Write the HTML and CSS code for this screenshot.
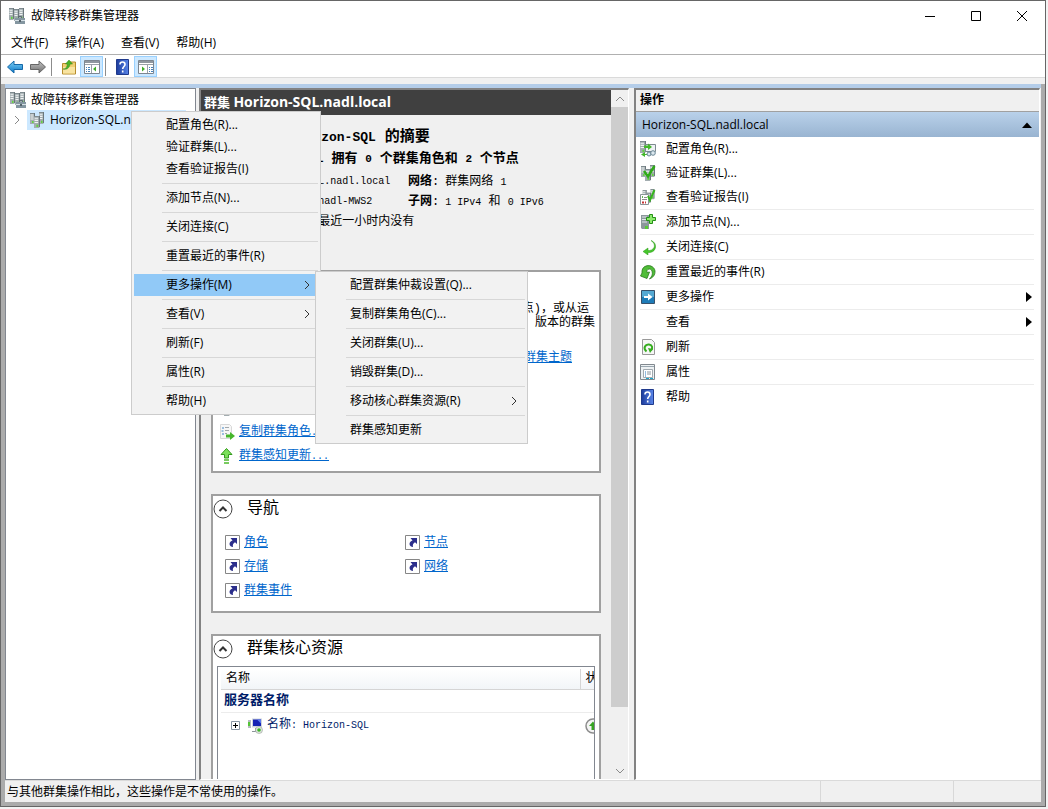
FILE: index.html
```html
<!DOCTYPE html>
<html lang="zh-CN">
<head>
  <meta charset="UTF-8" />
  <meta name="viewport" content="width=device-width, initial-scale=1" />
  <title>故障转移群集管理器</title>
  <link rel="stylesheet" href="styles.css">
</head>
<body>
  <!-- shared icons -->
  <svg class="defs" width="0" height="0" aria-hidden="true">
    <defs>
      <linearGradient id="gBlue" x1="0" y1="0" x2="0" y2="1"><stop offset="0" stop-color="#7fd0f5"/><stop offset="1" stop-color="#0a78c8"/></linearGradient>
      <linearGradient id="gGray" x1="0" y1="0" x2="0" y2="1"><stop offset="0" stop-color="#c4c4c4"/><stop offset="1" stop-color="#6e6e6e"/></linearGradient>
      <linearGradient id="gHelp" x1="0" y1="0" x2="1" y2="0"><stop offset="0" stop-color="#1c3c9c"/><stop offset="1" stop-color="#5a86ea"/></linearGradient>
      <symbol id="rack" viewBox="0 0 5 11" preserveAspectRatio="none">
        <path d="M0 1 1 0h4v10l-1 1H0z" fill="#a3adb0"/>
        <path d="M.5 2h3M.5 4h3M.5 6h3" stroke="#f0f3f3"/>
        <path d="M4.500 0v10" stroke="#6b777c"/>
        <path d="M0 .5h4" stroke="#7f8b90"/>
        <path d="M2 8h1.500v2H2z" fill="#62d53e"/>
      </symbol>
      <symbol id="cluster" viewBox="0 0 16 16">
        <use href="#rack" x="0" y="0" width="5" height="12"/>
        <use href="#rack" x="5" y="1" width="5" height="12"/>
        <use href="#rack" x="10" y="0" width="5" height="12"/>
        <path d="M9.500 10V8.500h3V10" fill="none" stroke="#5d6b73"/>
        <path d="M6 10h10v6H6z" fill="#8496a0"/><path d="M6 12.500h10" stroke="#d7e1e6"/><path d="M10 12h2v2h-2z" fill="#55636b"/>
      </symbol>
      <symbol id="racks" viewBox="0 0 16 16">
        <use href="#rack" x="1" y="1" width="5" height="11"/>
        <use href="#rack" x="10" y="0" width="5" height="12"/>
        <use href="#rack" x="5" y="4" width="6" height="12"/>
      </symbol>
      <symbol id="help" viewBox="0 0 16 16">
        <path d="M1.500.5h12v15h-12z" fill="url(#gHelp)" stroke="#203a8c"/>
        <path d="M5 5.500c0-3.300 5-3.300 5 0 0 2-2.300 2-2.300 4.500M7.700 11.500v2" fill="none" stroke="#fff" stroke-width="1.600"/>
      </symbol>
      <symbol id="shortcut" viewBox="0 0 16 16">
        <path d="M.5.5h14v14H.5z" fill="#fff" stroke="#868686"/>
        <path d="M12 3v6l-2-1.700C8 8.500 7.500 10 8 12c-1.500 0-3.500-1-3.500-3 0-1.700 1.500-3 3-3.500L5.500 3z" fill="#2c2f8c"/>
      </symbol>
      <symbol id="collapse" viewBox="0 0 20 20">
        <circle cx="10" cy="10" r="9" fill="#fff" stroke="#444"/>
        <path d="M6.500 12 10 8.500l3.500 3.500" fill="none" stroke="#333" stroke-width="2"/>
      </symbol>
      <symbol id="chev" viewBox="0 0 8 8"><path d="M2 0l4 4-4 4" fill="none" stroke="currentColor"/></symbol>
    </defs>
  </svg>

  <div class="window">
    <header class="titlebar">
      <svg class="icon"><use href="#cluster"/></svg>
      <h1>故障转移群集管理器</h1>
      <div class="window-buttons">
        <button aria-label="最小化"><svg viewBox="0 0 10 10"><path d="M0 5.500h10"/></svg></button>
        <button aria-label="最大化"><svg viewBox="0 0 10 10"><path d="M.5.5h9v9h-9z"/></svg></button>
        <button aria-label="关闭"><svg viewBox="0 0 10 10"><path d="M0 0l10 10M10 0 0 10"/></svg></button>
      </div>
    </header>

    <nav class="menubar">
      <button>文件(F)</button>
      <button>操作(A)</button>
      <button>查看(V)</button>
      <button>帮助(H)</button>
    </nav>

    <div class="toolbar">
      <button aria-label="后退"><svg class="icon" viewBox="0 0 16 16"><path d="M.5 8 7 2v3.500h8.500v5H7V14z" fill="url(#gBlue)" stroke="#1668a8"/></svg></button>
      <button aria-label="前进"><svg class="icon" viewBox="0 0 16 16"><path d="M15.500 8 9 2v3.500H.5v5H9V14z" fill="url(#gGray)" stroke="#666"/></svg></button>
      <span class="divider"></span>
      <button aria-label="向上"><svg class="icon" viewBox="0 0 16 16"><path d="M1.500 4.500h6l1-1.500h6v12h-13z" fill="#efcf72" stroke="#b58c2c"/><path d="M2 8h12v6.500H2z" fill="#f8e3a0"/><path d="M2 10c3 0 4-2 4.500-5H4.500L8 1l3.500 4H9C8.500 9 6 11 2 10z" fill="#49b428" stroke="#2c8317" stroke-width=".5"/></svg></button>
      <button class="on" aria-label="显示/隐藏控制台树" aria-pressed="true"><svg class="icon" viewBox="0 0 16 16"><path d="M.5 1.500h15v13H.5z" fill="#fff" stroke="#7d8690"/><path d="M1 2h14v2H1z" fill="#8f979f"/><path d="M1 5.500h14M7.500 6v8" stroke="#9aa1a8"/><path d="M2 8.500h1M4 8.500h2M2 10.500h1M4 10.500h2M2 12.500h1M4 12.500h2" stroke="#4784bd"/><path d="M12 7.500v5L9 10z" fill="#3fae29"/></svg></button>
      <span class="divider"></span>
      <button aria-label="帮助"><svg class="icon"><use href="#help"/></svg></button>
      <button class="on" aria-label="显示/隐藏操作窗格" aria-pressed="true"><svg class="icon" viewBox="0 0 16 16"><path d="M.5 1.500h15v13H.5z" fill="#fff" stroke="#7d8690"/><path d="M1 2h14v2H1z" fill="#8f979f"/><path d="M1 5.500h14M9.500 6v8" stroke="#9aa1a8"/><path d="M11 8.500h1M13 8.500h2M11 10.500h1M13 10.500h2M11 12.500h1M13 12.500h2" stroke="#4784bd"/><path d="M4 7.500v5L7 10z" fill="#3fae29"/></svg></button>
    </div>

    <div class="frame">
      <div class="panes">
        <aside class="tree">
          <div class="tree-root"><svg class="icon"><use href="#cluster"/></svg>故障转移群集管理器</div>
          <div class="tree-child">
            <svg class="chevron"><use href="#chev"/></svg>
            <span class="tree-selected"><svg class="icon"><use href="#racks"/></svg><span>Horizon-SQL.nadl.local</span></span>
          </div>
        </aside>

        <main class="main">
          <div class="content">
            <h2 class="banner">群集 <span>Horizon-SQL.nadl.local</span></h2>

            <section class="summary">
              <div class="summary-head">
                <svg class="icon"><use href="#cluster"/></svg>
                <div>
                  <h3>群集 <span class="latin">Horizon-SQL</span> 的摘要</h3>
                  <p><span class="latin">Horizon-SQL</span> 拥有 <span class="latin">0</span> 个群集角色和 <span class="latin">2</span> 个节点</p>
                </div>
              </div>
              <dl class="facts">
                <div><dt>名称<i>:</i></dt><dd class="latin">Horizon-SQL.nadl.local</dd></div>
                <div><dt>网络<i>:</i></dt><dd>群集网络 <span class="latin">1</span></dd></div>
                <div><dt>当前主机服务器<i>:</i></dt><dd class="latin">nadl-MWS2</dd></div>
                <div><dt>子网<i>:</i></dt><dd><span class="latin">1 IPv4</span> 和 <span class="latin">0 IPv6</span></dd></div>
                <div><dt>最近的群集事件<i>:</i></dt><dd>最近一小时内没有</dd></div>
              </dl>
            </section>

            <section class="card configure">
              <h3 class="card-title"><svg><use href="#collapse"/></svg>配置</h3>
              <p class="intro">
                <span>验证硬件配置(可选)，添加服务器(节点)，或从运</span>
                <span>行 <a href="#">Windows Server</a> 版本的群集</span>
              </p>
              <p class="topic"><a href="#">故障转移群集主题</a></p>
              <ul class="tasks">
                <li><svg class="icon"><use href="#racks"/></svg><a href="#">验证群集<span class="latin">...</span></a></li>
                <li><svg class="icon"><use href="#racks"/></svg><a href="#">添加节点<span class="latin">...</span></a></li>
                <li><svg class="icon" viewBox="0 0 16 16"><path d="M1.500.5h9l2 2v12h-11z" fill="#f7f7f7" stroke="#d8d8d8"/><path d="M3 4h2M2.500 7h2M3 10h2" stroke="#3e86c8"/><path d="M6 3.500h4M6 6.500h4M6 9.500h2" stroke="#a2a8ac"/><path d="M7 10.500h4V8l5 4-5 4v-2.500H7z" fill="#46b62c"/></svg><a href="#">复制群集角色<span class="latin">...</span></a></li>
                <li><svg class="icon" viewBox="0 0 16 16"><path d="M7.500.5 13 6.500H9.500V10h-4V6.500H2z" fill="#7be05a" stroke="#349a1c"/><path d="M5 12h5M5 15h5" stroke="#4dbb2c" stroke-width="1.500"/></svg><a href="#">群集感知更新<span class="latin">...</span></a></li>
              </ul>
            </section>

            <section class="card nav">
              <h3 class="card-title"><svg><use href="#collapse"/></svg>导航</h3>
              <ul class="links">
                <li><svg class="icon"><use href="#shortcut"/></svg><a href="#">角色</a></li>
                <li><svg class="icon"><use href="#shortcut"/></svg><a href="#">节点</a></li>
                <li><svg class="icon"><use href="#shortcut"/></svg><a href="#">存储</a></li>
                <li><svg class="icon"><use href="#shortcut"/></svg><a href="#">网络</a></li>
                <li><svg class="icon"><use href="#shortcut"/></svg><a href="#">群集事件</a></li>
              </ul>
            </section>

            <section class="card resources">
              <h3 class="card-title"><svg><use href="#collapse"/></svg>群集核心资源</h3>
              <div class="grid">
                <table>
                  <thead>
                    <tr><th>名称</th><th class="state">状态</th></tr>
                  </thead>
                  <tbody>
                    <tr class="group"><td colspan="2">服务器名称</td></tr>
                    <tr class="row">
                      <td>
                        <div class="resource">
                          <svg class="expand" viewBox="0 0 9 9"><path d="M.5.5h8v8h-8z" fill="#fff" stroke="#8b97a5"/><path d="M2 4.500h5M4.500 2v5" stroke="#000"/></svg>
                          <svg class="icon" viewBox="0 0 16 16"><path d="M1 2h3v8H1z" fill="#b5bbbf"/><path d="M1 4h2v4H1z" fill="#54c436"/><path d="M5 .5h10v9H5z" fill="#cfd5dc"/><path d="M6 1.500h8v6.500H6z" fill="#1521b4"/><path d="M10 1.500h4v4z" fill="#5c7cf0"/><path d="M8 10h2v3h2v1H5v-1h3z" fill="#8c9499"/><circle cx="12" cy="12" r="3.500" fill="#dfe5df" stroke="#9aa39a" stroke-width=".6"/><circle cx="12" cy="12" r="1.800" fill="#3cb428"/></svg>
                          <span>名称<span class="latin">: Horizon-SQL</span></span>
                        </div>
                      </td>
                      <td class="state"><svg class="icon" viewBox="0 0 16 16"><circle cx="8" cy="8" r="7" fill="#f4f4f4" stroke="#8c8c8c" stroke-width="1.500"/><path d="M8 3.500 12 8H9.500v4h-3V8H4z" fill="#36a322"/></svg></td>
                    </tr>
                  </tbody>
                </table>
              </div>
            </section>
          </div>

          <div class="scrollbar">
            <button aria-label="向上滚动"><svg viewBox="0 0 8 8"><path d="M0 6l4-4 4 4"/></svg></button>
            <div class="thumb"></div>
            <button aria-label="向下滚动"><svg viewBox="0 0 8 8"><path d="M0 2l4 4 4-4"/></svg></button>
          </div>
        </main>

        <aside class="actions">
          <h2>操作</h2>
          <h3><span>Horizon-SQL.nadl.local</span><svg viewBox="0 0 10 6"><path d="M0 6l5-5.500L10 6z"/></svg></h3>
          <ul>
            <li><button><svg class="icon" viewBox="0 0 16 16"><use href="#rack" x="0" y="0" width="6" height="12"/><path d="M5.500 3.500h10v7h-10z" fill="#eef2f4" stroke="#7d8a90"/><path d="M4 4.500h4V2.500l4 3.500-4 3V7H4zM9 13H5v-2l-4 2.500L5 16v-2h4z" fill="#43b82a"/><circle cx="9" cy="13" r="2" fill="#dbe7ee" stroke="#698594"/><circle cx="13" cy="12" r="2.300" fill="#dbe7ee" stroke="#698594"/></svg>配置角色(R)...</button></li>
            <li><button><svg class="icon" viewBox="0 0 16 16"><use href="#racks" width="16" height="16"/><path d="M4 6l4 5.500L14.500 1" fill="none" stroke="#2faa18" stroke-width="2.500"/></svg>验证群集(L)...</button></li>
            <li><button><svg class="icon" viewBox="0 0 16 16"><use href="#racks" x="1" width="15" height="14"/><path d="M.5 5.500h8v10h-8z" fill="#fff" stroke="#8a9498"/><path d="M2 8h1" stroke="#2f9c1c" stroke-width="1.500"/><path d="M4 8.500h3M2 10.500h5" stroke="#8c8c8c"/><path d="M2 13.500h2M5 13.500h1" stroke="#c53434" stroke-width="2"/><path d="M8 7l2 4 4.500-10" fill="none" stroke="#36b41d" stroke-width="2"/></svg>查看验证报告(I)</button></li>
            <li class="line"><button><svg class="icon" viewBox="0 0 16 16"><path d="M1 1h8v14H2l-1-1z" fill="#8b979b"/><path d="M2 3h5M2 5.500h5M2 8h5" stroke="#e2e8ea"/><path d="M5 12h3v3H5z" fill="#57cb35"/><path d="M9.500.5h3v3h3v3h-3v3h-3v-3h-3v-3h3z" fill="#8bea6b" stroke="#249016"/></svg>添加节点(N)...</button></li>
            <li class="line"><button><svg class="icon" viewBox="0 0 16 16"><path d="M11 1.500c5 3 4.500 9-1.500 10H8V9l-5 3.500L8 16v-2.500h2c7-1 7.500-10 1-12z" fill="#46c62c" stroke="#2c981a" stroke-width=".5"/></svg>关闭连接(C)</button></li>
            <li class="line"><button><svg class="icon" viewBox="0 0 16 16"><path d="M2 9C1-.5 14-.5 15 7c.3 4-2 6.500-5.500 8 2.500-2.500 3.500-5 2.500-8-1-3-6-2.500-5 1.500l2.500-.5L7 14.500.5 12z" fill="#50bd38" stroke="#28791c" stroke-width=".8"/></svg>重置最近的事件(R)</button></li>
            <li class="line"><button><svg class="icon" viewBox="0 0 16 16"><path d="M1.500 1.500h13v13h-13z" fill="#1e7cb8" stroke="#38516b"/><path d="M2 2h12v6H2z" fill="#55a9d3"/><path d="M4 7h4V4.500L12.500 8 8 11.500V9H4z" fill="#fff"/></svg>更多操作<i class="more"></i></button></li>
            <li class="line"><button><span class="icon"></span>查看<i class="more"></i></button></li>
            <li class="line"><button><svg class="icon" viewBox="0 0 16 16"><path d="M2.500.5h9l3 3v12h-12z" fill="#f6f6f6" stroke="#999"/><path d="M6.500 12.500C2.500 9 5.500 5 9 5.500c3.500.5 4 3.500 2 6" fill="none" stroke="#37ad20" stroke-width="2"/><path d="M8 9l5 1-3 4z" fill="#37ad20"/></svg>刷新</button></li>
            <li class="line"><button><svg class="icon" viewBox="0 0 16 16"><path d="M.5.5h14v15H.5z" fill="#edf1f3" stroke="#81898f"/><path d="M1 2.500h13" stroke="#9aa7b0"/><path d="M3.500 5.500h9v8h-9z" fill="#fff" stroke="#a1a9af"/><path d="M5 8h1M5 10h1M5 12h1" stroke="#267bc2"/><path d="M7 8h4M7 10h4" stroke="#8a949c"/><path d="M6 14.500h3M10 14.500h3" stroke="#1da6ca"/></svg>属性</button></li>
            <li class="line"><button><svg class="icon"><use href="#help"/></svg>帮助</button></li>
          </ul>
        </aside>
      </div>

      <footer class="status">
        <span>与其他群集操作相比，这些操作是不常使用的操作。</span>
        <span></span>
        <span></span>
      </footer>
    </div>

    <ul class="menu context-menu" role="menu">
      <li><button role="menuitem">配置角色(R)...</button></li>
      <li><button role="menuitem">验证群集(L)...</button></li>
      <li><button role="menuitem">查看验证报告(I)</button></li>
      <li class="sep"><button role="menuitem">添加节点(N)...</button></li>
      <li class="sep"><button role="menuitem">关闭连接(C)</button></li>
      <li class="sep"><button role="menuitem">重置最近的事件(R)</button></li>
      <li class="sep"><button role="menuitem" class="active" aria-haspopup="true">更多操作(M)<svg class="arrow"><use href="#chev"/></svg></button></li>
      <li class="sep"><button role="menuitem" aria-haspopup="true">查看(V)<svg class="arrow"><use href="#chev"/></svg></button></li>
      <li class="sep"><button role="menuitem">刷新(F)</button></li>
      <li class="sep"><button role="menuitem">属性(R)</button></li>
      <li class="sep"><button role="menuitem">帮助(H)</button></li>
    </ul>

    <ul class="menu submenu" role="menu">
      <li><button role="menuitem">配置群集仲裁设置(Q)...</button></li>
      <li class="sep"><button role="menuitem">复制群集角色(C)...</button></li>
      <li class="sep"><button role="menuitem">关闭群集(U)...</button></li>
      <li class="sep"><button role="menuitem">销毁群集(D)...</button></li>
      <li class="sep"><button role="menuitem" aria-haspopup="true">移动核心群集资源(R)<svg class="arrow"><use href="#chev"/></svg></button></li>
      <li class="sep"><button role="menuitem">群集感知更新</button></li>
    </ul>
  </div>
</body>
</html>
```
FILE: styles.css
```css
* {
  box-sizing: border-box;
}

body {
  margin: 0;
  padding: 0 2px 2px 0;
  height: 100vh;
  overflow: hidden;
  background: #f3f3f3;
  color: #000;
  font-family: "Open Sans", "Noto Sans CJK SC", sans-serif;
  font-size: 12px;
  line-height: 20px;
}

h1, h2, h3, p, ul, dl, dd {
  margin: 0;
  padding: 0;
  font-size: 12px;
  font-weight: normal;
}

ul {
  list-style: none;
}

button {
  padding: 0;
  border: none;
  background: none;
  color: inherit;
  font: inherit;
}

a {
  color: #0066cc;
}

svg {
  flex: none;
}

.defs {
  position: absolute;
}

.icon {
  width: 16px;
  height: 16px;
  flex: none;
}

.window {
  position: relative;
  display: flex;
  flex-direction: column;
  height: 100%;
  border: 1px solid #666;
  background: #f0f0f0;
}

/* title, menu and tool bars */
.titlebar {
  display: flex;
  align-items: center;
  gap: 6px;
  height: 29px;
  padding-left: 8px;
  background: #fff;
}

.window-buttons {
  display: flex;
  margin-left: auto;
}

.window-buttons button {
  display: flex;
  align-items: center;
  justify-content: center;
  width: 46px;
  height: 29px;
}

.window-buttons svg {
  width: 10px;
  height: 10px;
  fill: none;
  stroke: #000;
}

.menubar {
  display: flex;
  gap: 17px;
  height: 25px;
  padding: 3px 10px;
  border-bottom: 1px solid #b0b0b0;
  background: #fff;
}

.menubar button {
  line-height: 20px;
}

.toolbar {
  display: flex;
  align-items: center;
  height: 23px;
  padding: 1px 0 0 2px;
  border-bottom: 1px solid #dadada;
  background: #fff;
}

.toolbar button {
  display: flex;
  align-items: center;
  justify-content: center;
  width: 23px;
  height: 21px;
}

.toolbar .on {
  border: 1px solid #99d1ff;
  background: #cce8ff;
}

.toolbar .divider {
  width: 1px;
  height: 18px;
  margin: 0 2px;
  background: #8c8c8c;
}

.toolbar .divider + button {
  margin-left: 3px;
}

.frame {
  display: flex;
  flex: 1;
  flex-direction: column;
  min-height: 0;
  margin-top: 6px;
  border: 4px solid #ababab;
  border-top: none;
  background: #f0f0f0;
}

.panes {
  display: flex;
  flex: 1;
  gap: 3px;
  min-height: 0;
  padding-right: 1px;
  border-top: 4px solid #b4cde9;
}

/* console tree */
.tree {
  width: 191px;
  padding-top: 1px;
  overflow: hidden;
  border: 1px solid #828790;
  background: #fff;
}

.tree-root {
  display: flex;
  align-items: center;
  gap: 5px;
  padding-left: 4px;
}

.tree-child {
  display: flex;
  align-items: center;
  gap: 6px;
  padding: 0 9px 0 7px;
}

.tree-selected {
  display: flex;
  flex: 1;
  align-items: center;
  gap: 5px;
  min-width: 0;
  padding-left: 2px;
  background: #cce8ff;
}

.chevron {
  width: 8px;
  height: 8px;
  color: #888;
}

/* centre pane */
.main {
  display: flex;
  width: 430px;
  overflow: hidden;
  border: 2px solid #828282;
  border-right: 1px solid #fff;
  border-bottom: 1px solid #fff;
}

.content {
  display: flex;
  flex: 1;
  flex-direction: column;
  min-width: 0;
  font-family: "Liberation Mono", "Noto Sans CJK SC", monospace;
  line-height: 20px;
}

.latin {
  font-size: 10px;
}

.banner {
  flex: none;
  height: 25px;
  padding: 2px 3px 3px;
  background: #404040;
  color: #fff;
  font-family: "Open Sans", "Noto Sans CJK SC", sans-serif;
  font-size: 13px;
  font-weight: bold;
}

.banner span {
  font-size: 14px;
}

.summary {
  flex: none;
  padding: 13px 20px 38px;
}

.summary-head {
  display: flex;
  gap: 14px;
}

.summary-head h3 {
  height: 21px;
  font-size: 15px;
  font-weight: bold;
}

.summary-head h3 .latin {
  font-size: 13px;
}

.summary-head p {
  height: 20px;
  font-size: 13px;
  font-weight: bold;
}

.summary-head p .latin {
  font-size: 11px;
}

.facts {
  display: grid;
  grid-template-columns: 187px 1fr;
  padding-top: 3px;
}

.facts div {
  display: flex;
  gap: 6px;
  height: 20px;
  white-space: nowrap;
}

.facts dt {
  font-weight: bold;
}

.facts i {
  font-style: normal;
  font-weight: normal;
}

.card {
  flex: none;
  margin: 0 10px 21px;
  border: 2px solid #a0a0a0;
  background: #fff;
}

.card-title {
  display: flex;
  align-items: center;
  gap: 14px;
  height: 26px;
  font-size: 16px;
}

.card-title svg {
  width: 20px;
  height: 20px;
}

.intro {
  padding: 4px 4px 0 8px;
  text-align: right;
  line-height: 14px;
}

.intro span {
  display: block;
  white-space: nowrap;
}

.intro span:first-child {
  padding-right: 6px;
}

.topic {
  padding: 18px 27px 0 0;
  text-align: right;
}

.tasks {
  padding: 4px 6px 3px;
}

.tasks li,
.links li {
  display: flex;
  align-items: center;
  gap: 4px;
  height: 24px;
}

.links {
  display: grid;
  grid-template-columns: 1fr 1fr;
  padding: 9px 14px 8px 12px;
}

.links li {
  gap: 3px;
}

.resources {
  display: flex;
  flex: 1;
  flex-direction: column;
  margin-bottom: 0;
  border-bottom: none;
}

.grid {
  flex: 1;
  margin: 4px 4px 0;
  padding: 2px 0 0 3px;
  overflow: hidden;
  border: 1px solid #828790;
  border-bottom: none;
}

.grid table {
  width: 100%;
  table-layout: fixed;
  border-collapse: collapse;
}

.grid th {
  height: 20px;
  padding: 0 5px;
  border-bottom: 1px solid #d5d5d5;
  background: linear-gradient(#fff, #f2f5f8);
  font-weight: normal;
  line-height: 18px;
  text-align: left;
}

.grid .state {
  width: 14px;
  padding: 0 0 0 5px;
  overflow: hidden;
  white-space: nowrap;
}

.grid th.state {
  border-left: 1px solid #d5d5d5;
}

.grid td {
  padding: 0;
  color: #001c68;
}

.group td {
  height: 23px;
  padding-left: 3px;
  border-bottom: 1px solid #ececec;
  font-size: 13px;
  font-weight: bold;
}

.resource {
  display: flex;
  align-items: center;
  gap: 4px;
  height: 26px;
  padding-left: 10px;
}

.resource .icon {
  margin-left: 3px;
}

.row svg {
  display: block;
}

.expand {
  width: 9px;
  height: 9px;
}

.scrollbar {
  display: flex;
  flex-direction: column;
  width: 17px;
}

.scrollbar button {
  display: flex;
  align-items: center;
  justify-content: center;
  height: 17px;
}

.scrollbar svg {
  width: 8px;
  height: 8px;
  fill: none;
  stroke: #8a8a8a;
}

.scrollbar .thumb {
  flex: 1;
  margin-bottom: 55px;
  background: #cdcdcd;
}

/* actions pane */
.actions {
  flex: 1;
  margin-left: 2px;
  overflow: hidden;
  border: 2px solid #828282;
  border-right: 1px solid #fff;
  border-bottom: 1px solid #fff;
  background: #fff;
}

.actions h2 {
  height: 22px;
  padding-left: 4px;
  border-bottom: 1px solid #a0a0a0;
  background: #f0f0f0;
  font-weight: bold;
}

.actions h3 {
  display: flex;
  align-items: center;
  justify-content: space-between;
  height: 25px;
  padding: 0 7px 0 6px;
  background: linear-gradient(#b9d1ea, #99b4d1);
}

.actions h3 svg {
  width: 10px;
  height: 6px;
}

.actions ul {
  padding: 0 5px 0 4px;
}

.actions .line {
  border-top: 1px solid #ececec;
}

.actions button {
  display: flex;
  align-items: center;
  gap: 10px;
  width: 100%;
  height: 24px;
  text-align: left;
}

.more {
  margin-left: auto;
  margin-right: 2px;
  border: 5px solid transparent;
  border-right: none;
  border-left: 6px solid #000;
}

/* status bar */
.status {
  display: flex;
  height: 22px;
  border-top: 1px solid #dadada;
}

.status span {
  padding: 1px 2px;
  border-right: 1px solid #d8d8d8;
}

.status span:first-child {
  flex: 1;
}

.status span:nth-child(2) {
  width: 133px;
}

.status span:last-child {
  width: 87px;
  border-right: none;
}

/* popup menus */
.menu {
  position: absolute;
  padding: 2px;
  border: 1px solid #ccc;
  background: #f2f2f2;
}

.context-menu {
  top: 110px;
  left: 130px;
  width: 190px;
}

.submenu {
  top: 270px;
  left: 314px;
  width: 213px;
}

.menu .sep::before {
  display: block;
  height: 1px;
  margin: 3px 0 3px 28px;
  background: #d7d7d7;
  content: "";
}

.menu button {
  display: flex;
  align-items: center;
  justify-content: space-between;
  width: 100%;
  height: 22px;
  padding: 0 7px 0 32px;
  text-align: left;
}

.menu .active {
  background: #91c9f7;
}

.arrow {
  width: 8px;
  height: 8px;
  color: #333;
}
```
